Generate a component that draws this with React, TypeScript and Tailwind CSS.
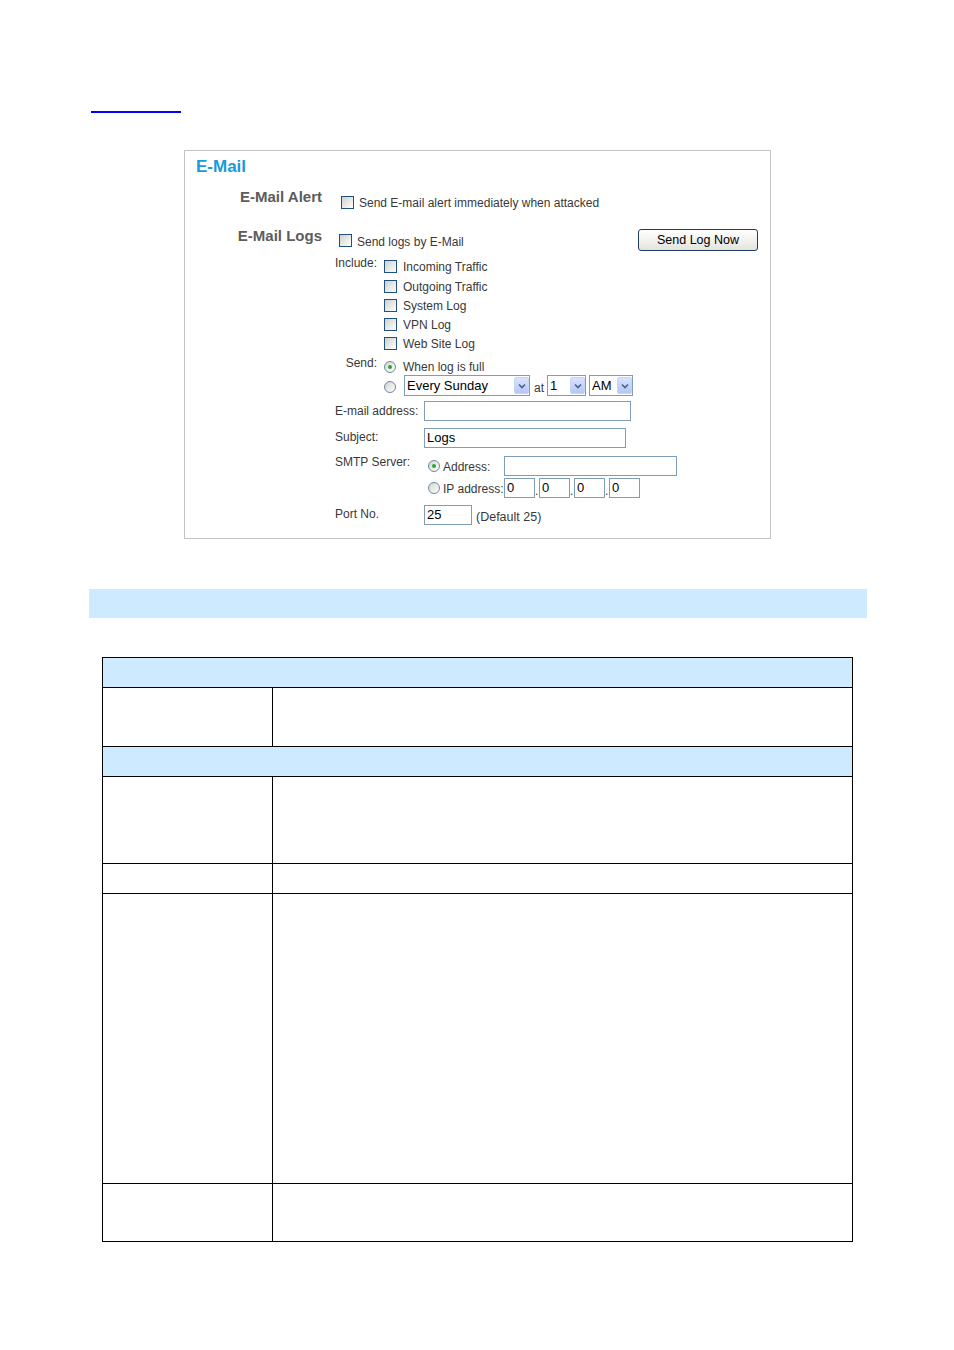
function Checkbox() {
  return (
    <span className="block h-[13px] w-[13px] shrink-0 border border-[#1c5180] bg-linear-to-br from-[#d0d0ca] to-white" />
  )
}

function Radio({ checked = false }: { checked?: boolean }) {
  return (
    <span className="flex h-[12px] w-[12px] shrink-0 items-center justify-center rounded-full border border-[#7088a3] bg-linear-to-br from-[#d4d4ce] to-white">
      {checked ? <span className="h-[4px] w-[4px] rounded-full bg-[#2aa82a]" /> : null}
    </span>
  )
}

function Select({ value, width }: { value: string; width: string }) {
  return (
    <div className={`flex h-[21px] items-center border border-[#7f9db9] bg-white ${width}`}>
      <span className="flex-1 pl-[2px] text-[13px] leading-[19px] text-black">{value}</span>
      <span className="flex h-[17px] w-[15px] items-center justify-center rounded-[2px] border border-[#c5d4fb] bg-linear-to-b from-[#d9e3fc] to-[#b4c7f6]">
        <svg width="8" height="6" viewBox="0 0 8 6">
          <path d="M1 1.5 L4 4.5 L7 1.5" fill="none" stroke="#4d6185" strokeWidth="1.6" />
        </svg>
      </span>
    </div>
  )
}

function TextBox({ value = '', width }: { value?: string; width: string }) {
  return (
    <div className={`h-[20px] shrink-0 border border-[#7f9db9] bg-white pl-[2px] text-[13px] leading-[18px] text-black ${width}`}>
      {value}
    </div>
  )
}

const includeItems = [
  { label: 'Incoming Traffic', h: 'h-[20px]' },
  { label: 'Outgoing Traffic', h: 'h-[19px]' },
  { label: 'System Log', h: 'h-[19px]' },
  { label: 'VPN Log', h: 'h-[19px]' },
  { label: 'Web Site Log', h: 'h-[19px]' },
]

export default function App() {
  return (
    <main className="h-[1350px] w-[954px] bg-white pt-[111px] font-['Liberation_Sans',Arial,sans-serif] text-[#383838]">
      <div className="ml-[91px] h-[2px] w-[90px] bg-[#0000ff]" />

      {/* e-mail settings panel */}
      <div className="ml-[184px] mt-[37px] h-[389px] w-[587px] border border-[#c3c3c3]">
        <div className="pl-[11px] pt-[6px] text-[17px] font-bold leading-[20px] text-[#1a9ad6]">E-Mail</div>

        <div className="mt-[10px] flex h-[38px] items-start">
          <div className="w-[137px] text-right text-[15px] font-bold leading-[20px] text-[#5c5c5c]">E-Mail Alert</div>
          <div className="ml-[19px] mt-[9px] flex items-start gap-[5px]">
            <Checkbox />
            <span className="text-[12px] leading-[14px]">Send E-mail alert immediately when attacked</span>
          </div>
        </div>

        <div className="flex h-[31px] items-start">
          <div className="mt-[1px] w-[137px] text-right text-[15px] font-bold leading-[20px] text-[#5c5c5c]">E-Mail Logs</div>
          <div className="ml-[17px] mt-[9px] flex items-start gap-[5px]">
            <Checkbox />
            <span className="mt-[1px] text-[12px] leading-[14px]">Send logs by E-Mail</span>
          </div>
          <button
            type="button"
            className="ml-auto mr-[12px] mt-[4px] h-[22px] w-[120px] rounded-[3px] border border-[#1f3d63] bg-linear-to-b from-white to-[#e4e4de] text-[12.5px] leading-[20px] text-black"
          >
            Send Log Now
          </button>
        </div>

        <div className="ml-[150px] flex items-start">
          <div className="w-[42px] text-right text-[12px] leading-[14px]">Include:</div>
          <div className="ml-[7px] mt-[4px] flex flex-col">
            {includeItems.map((item) => (
              <div key={item.label} className={`flex items-start gap-[6px] ${item.h}`}>
                <Checkbox />
                <span className="text-[12px] leading-[14px]">{item.label}</span>
              </div>
            ))}
          </div>
        </div>

        <div className="ml-[150px] flex items-start">
          <div className="w-[42px] text-right text-[12px] leading-[14px]">Send:</div>
          <div className="ml-[7px] mt-[4px] flex flex-col">
            <div className="flex h-[15px] items-start gap-[7px]">
              <span className="mt-[1px]">
                <Radio checked />
              </span>
              <span className="text-[12px] leading-[14px]">When log is full</span>
            </div>
            <div className="flex h-[21px] items-start">
              <span className="mt-[6px]">
                <Radio />
              </span>
              <div className="ml-[8px]">
                <Select value="Every Sunday" width="w-[126px]" />
              </div>
              <span className="ml-[4px] mt-[6px] text-[12px] leading-[14px]">at</span>
              <div className="ml-[3px]">
                <Select value="1" width="w-[39px]" />
              </div>
              <div className="ml-[3px]">
                <Select value="AM" width="w-[44px]" />
              </div>
            </div>
          </div>
        </div>

        <div className="ml-[150px] mt-[5px] flex items-start">
          <div className="mt-[3px] w-[89px] text-[12px] leading-[14px]">E-mail address:</div>
          <TextBox width="w-[207px]" />
        </div>

        <div className="ml-[150px] mt-[7px] flex items-start">
          <div className="mt-[2px] w-[89px] text-[12px] leading-[14px]">Subject:</div>
          <TextBox value="Logs" width="w-[202px]" />
        </div>

        <div className="ml-[150px] mt-[5px] flex items-start">
          <div className="mt-[2px] w-[89px] text-[12px] leading-[14px]">SMTP Server:</div>
          <div className="ml-[4px] flex flex-col">
            <div className="mt-[3px] flex h-[20px] items-center">
              <Radio checked />
              <span className="ml-[3px] mt-[1px] w-[61px] text-[12px] leading-[14px]">Address:</span>
              <TextBox width="w-[173px]" />
            </div>
            <div className="mt-[2px] flex h-[20px] items-center">
              <Radio />
              <span className="ml-[3px] mt-[2px] w-[61px] whitespace-nowrap text-[12px] leading-[14px]">IP address:</span>
              <TextBox value="0" width="w-[31px]" />
              <span className="w-[4px] self-end text-[12px] leading-[14px]">.</span>
              <TextBox value="0" width="w-[31px]" />
              <span className="w-[4px] self-end text-[12px] leading-[14px]">.</span>
              <TextBox value="0" width="w-[31px]" />
              <span className="w-[4px] self-end text-[12px] leading-[14px]">.</span>
              <TextBox value="0" width="w-[31px]" />
            </div>
          </div>
        </div>

        <div className="ml-[150px] mt-[5px] flex items-start">
          <div className="mt-[4px] w-[89px] text-[12px] leading-[14px]">Port No.</div>
          <div className="mt-[2px]">
            <TextBox value="25" width="w-[48px]" />
          </div>
          <span className="ml-[4px] mt-[7px] text-[12.5px] leading-[14px]">(Default 25)</span>
        </div>
      </div>

      <div className="ml-[89px] mt-[50px] h-[29px] w-[778px] bg-[#cdeaff]" />

      {/* parameter table */}
      <div className="ml-[102px] mt-[39px] w-[751px] border-x border-t border-black">
        <div className="h-[30px] border-b border-black bg-[#cdeaff]" />
        <div className="flex h-[59px] border-b border-black">
          <div className="w-[169px]" />
          <div className="flex-1 border-l border-black" />
        </div>
        <div className="h-[30px] border-b border-black bg-[#cdeaff]" />
        <div className="flex h-[87px] border-b border-black">
          <div className="w-[169px]" />
          <div className="flex-1 border-l border-black" />
        </div>
        <div className="flex h-[30px] border-b border-black">
          <div className="w-[169px]" />
          <div className="flex-1 border-l border-black" />
        </div>
        <div className="flex h-[290px] border-b border-black">
          <div className="w-[169px]" />
          <div className="flex-1 border-l border-black" />
        </div>
        <div className="flex h-[58px] border-b border-black">
          <div className="w-[169px]" />
          <div className="flex-1 border-l border-black" />
        </div>
      </div>
    </main>
  )
}
